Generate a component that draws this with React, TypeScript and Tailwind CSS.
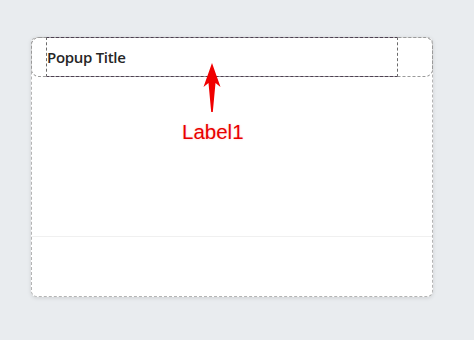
import React from "react";

export default function App() {
  return (
    <div className="relative w-[474px] h-[340px] bg-[#e9ecef] pt-[37px] pl-[31px] overflow-hidden">
      <div className="w-[402px] h-[260px] bg-white border border-dashed border-[#b4b4b4] rounded-[6px] shadow-[0_1px_4px_rgba(0,0,0,0.12)] flex flex-col">
        <div className="-mx-px -mt-px h-[40px] border border-dashed border-[#9a9a9a] rounded-[8px] flex pl-[14px]">
          <div className="-my-px w-[352px] h-[40px] border-y border-dashed border-y-[#4e3f52] border-x border-x-[#6b6b6b] flex items-center">
            <span className="text-[15px] font-semibold text-[#262626] leading-none mt-[1px] tracking-[-0.3px]" style={{ fontFamily: '"Open Sans", "Noto Sans", sans-serif' }}>
              Popup Title
            </span>
          </div>
        </div>
        <div className="h-[159px]" />
        <div className="border-t border-[#f0f0f0] flex-1" />
      </div>

      <svg className="absolute left-[200px] top-[62px]" width="24" height="52" viewBox="0 0 24 52">
        <path d="M12 1 L20.5 25 L15.5 21 L12.8 50 L11.2 50 L8.5 21 L3.5 25 Z" fill="#f00000" />
      </svg>
      <div
        className="absolute left-[182px] top-[122px] text-[20.5px] text-[#e80000] leading-none"
        style={{ fontFamily: '"Liberation Sans", Arial, sans-serif', textShadow: "0 0 2px rgba(255,0,0,0.25)" }}
      >
        Label1
      </div>
    </div>
  );
}
